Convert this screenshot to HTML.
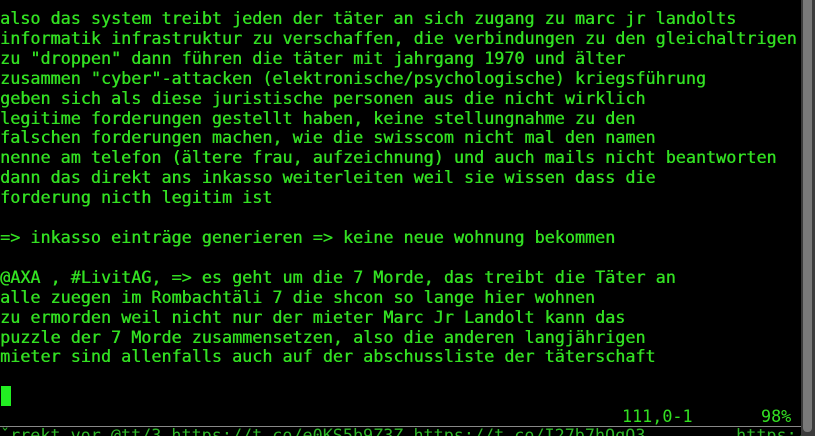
<!DOCTYPE html>
<html><head><meta charset="utf-8"><style>
html,body{margin:0;padding:0;background:#000;width:815px;height:436px;overflow:hidden;position:relative}
pre{position:absolute;left:0;top:9px;margin:0;font-family:"DejaVu Sans Mono","Liberation Mono",monospace;font-size:16.75px;line-height:19.9px;color:#33e022;white-space:pre;text-shadow:0.4px 0 0 #33e022}
.cur{position:absolute;left:1px;top:386px;width:10px;height:20px;background:#22ee22}
.st{position:absolute;top:406px;font-family:"DejaVu Sans Mono",monospace;font-size:16.75px;line-height:20px;color:#33e022}
.sb{position:absolute;left:801px;top:0;width:14px;height:436px;background:#3c3c3c}
.th{position:absolute;left:803px;top:0;width:9px;height:432px;background:#7a7a7a;border-radius:0 0 4px 4px}
.bl{position:absolute;left:0;top:426px;width:801px;height:1px;background:#888}
.bt{position:absolute;left:0;top:425px;font-family:"DejaVu Sans Mono",monospace;font-size:16.75px;line-height:20px;color:#2fb82a;white-space:pre}
</style></head><body>
<pre>also das system treibt jeden der täter an sich zugang zu marc jr landolts
informatik infrastruktur zu verschaffen, die verbindungen zu den gleichaltrigen
zu "droppen" dann führen die täter mit jahrgang 1970 und älter
zusammen "cyber"-attacken (elektronische/psychologische) kriegsführung
geben sich als diese juristische personen aus die nicht wirklich
legitime forderungen gestellt haben, keine stellungnahme zu den
falschen forderungen machen, wie die swisscom nicht mal den namen
nenne am telefon (ältere frau, aufzeichnung) und auch mails nicht beantworten
dann das direkt ans inkasso weiterleiten weil sie wissen dass die
forderung nicth legitim ist

=> inkasso einträge generieren => keine neue wohnung bekommen

@AXA , #LivitAG, => es geht um die 7 Morde, das treibt die Täter an
alle zuegen im Rombachtäli 7 die shcon so lange hier wohnen
zu ermorden weil nicht nur der mieter Marc Jr Landolt kann das
puzzle der 7 Morde zusammensetzen, also die anderen langjährigen
mieter sind allenfalls auch auf der abschussliste der täterschaft</pre>
<div class="cur"></div>
<div class="bt">ˇrrekt vor @tt/3 https://t.co/e0KS5b9Z3Z https://t.co/I27b7hQqQ3 , , , , https:/</div>
<div class="bl"></div>
<div class="st" style="left:622px;top:406px">111,0-1</div>
<div class="st" style="left:761px;top:406px">98%</div>
<div class="sb"></div><div class="th"></div>
</body></html>
